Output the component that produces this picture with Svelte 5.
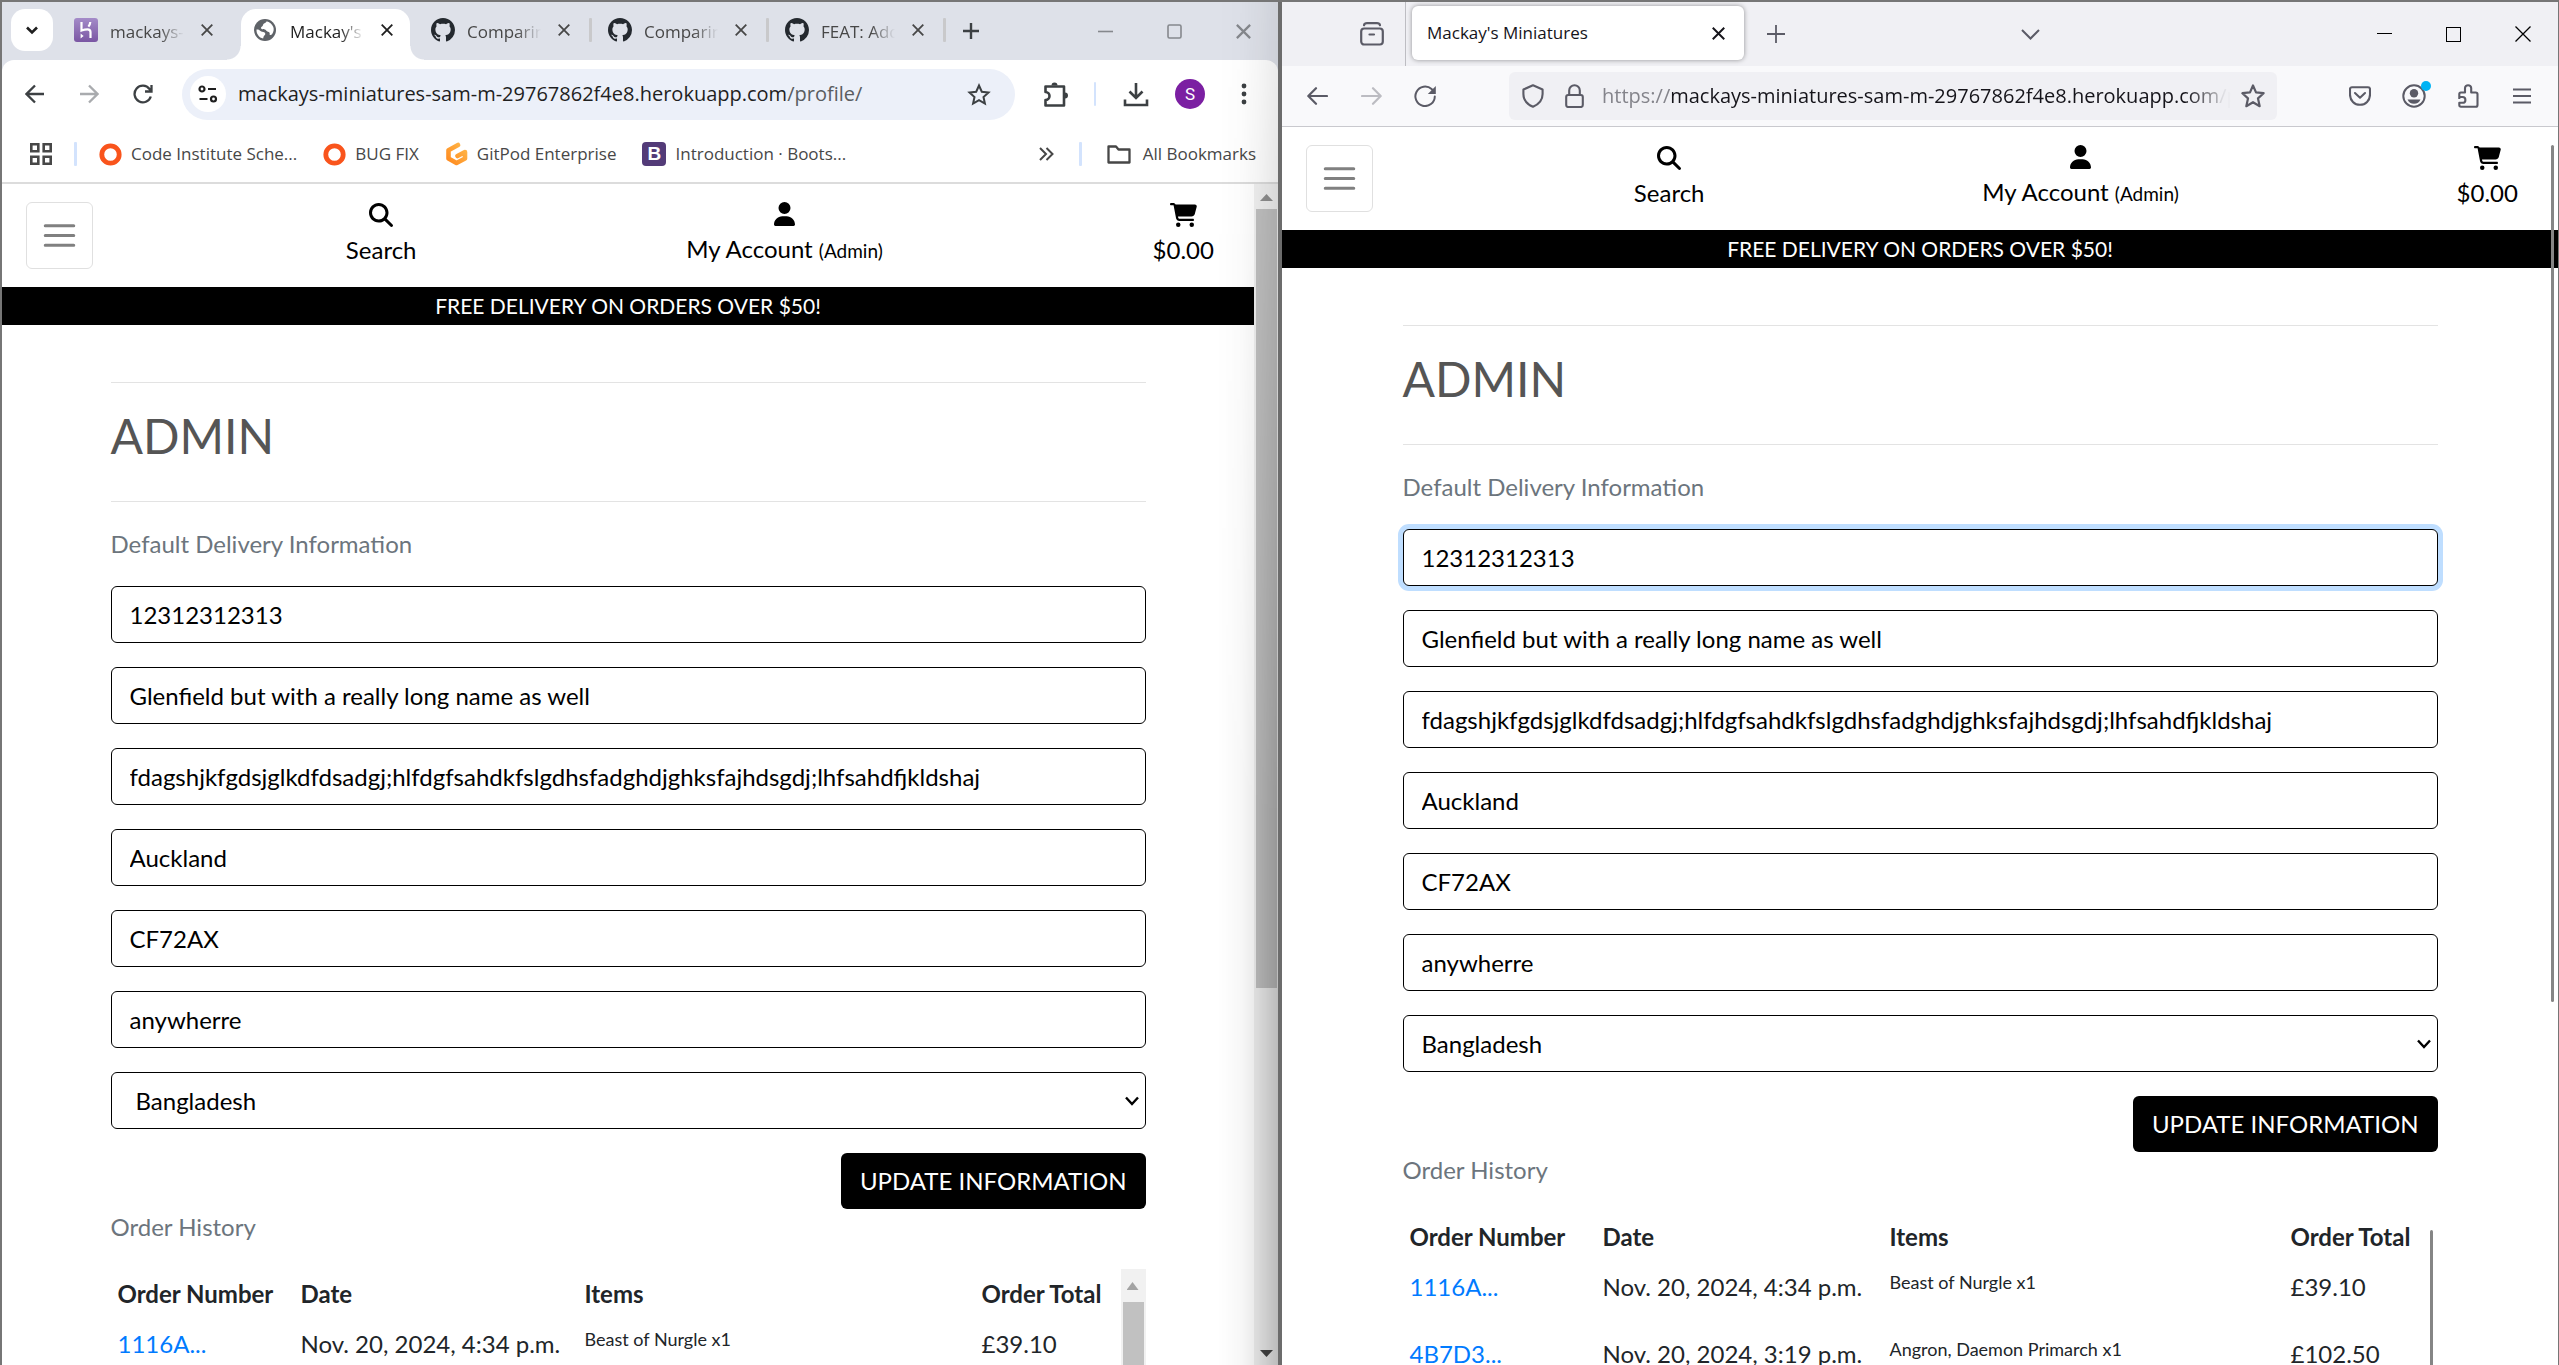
<script lang="ts">
  type Order = { number: string; date: string; items: string; total: string };

  const bookmarks = [
    { label: 'Code Institute Sche...', icon: 'ring' },
    { label: 'BUG FIX', icon: 'ring' },
    { label: 'GitPod Enterprise', icon: 'gitpod' },
    { label: 'Introduction · Boots...', icon: 'bootstrap' }
  ];

  const tabs = [
    { title: 'mackays-minis', icon: 'heroku', active: false },
    { title: "Mackay's Mini", icon: 'globe', active: true },
    { title: 'Comparing', icon: 'github', active: false },
    { title: 'Comparing', icon: 'github', active: false },
    { title: 'FEAT: Add or', icon: 'github', active: false }
  ];

  const fields = [
    { name: 'phone', label: 'Phone Number', value: '12312312313' },
    { name: 'address1', label: 'Street Address 1', value: 'Glenfield but with a really long name as well' },
    { name: 'address2', label: 'Street Address 2', value: 'fdagshjkfgdsjglkdfdsadgj;hlfdgfsahdkfslgdhsfadghdjghksfajhdsgdj;lhfsahdfjkldshaj' },
    { name: 'town', label: 'Town or City', value: 'Auckland' },
    { name: 'postcode', label: 'Postal Code', value: 'CF72AX' },
    { name: 'county', label: 'County', value: 'anywherre' }
  ];

  const orders: Order[] = [
    { number: '1116A...', date: 'Nov. 20, 2024, 4:34 p.m.', items: 'Beast of Nurgle x1', total: '£39.10' },
    { number: '4B7D3...', date: 'Nov. 20, 2024, 3:19 p.m.', items: 'Angron, Daemon Primarch x1', total: '£102.50' }
  ];
</script>

{#snippet cross(size: number)}
  <svg width={size} height={size} viewBox="0 0 12 12" fill="none" stroke="currentColor" stroke-width="1.8"><path d="M.7.7l10.6 10.6M11.3.7L.7 11.3" /></svg>
{/snippet}

{#snippet tabIcon(kind: string)}
  {#if kind === 'heroku'}
    <svg width="24" height="24" viewBox="0 0 24 24">
      <defs><linearGradient id="hk" x1="0" y1="0" x2="0" y2="1"><stop offset="0" stop-color="#a48bc8" /><stop offset="1" stop-color="#7a56a3" /></linearGradient></defs>
      <rect width="24" height="24" rx="3" fill="url(#hk)" />
      <path d="M7.5 4v8.6c2.300-.9 4.200-1.300 6-1.300 2 0 3 1 3 2.700v6M16.300 4c-.1 1.900-.8 3.300-1.900 4.600" fill="none" stroke="#fff" stroke-width="2.200" />
      <path d="M6.600 15.500l3 2.500-3 2.500z" fill="#fff" />
    </svg>
  {:else if kind === 'globe'}
    <svg width="22" height="22" viewBox="0 0 22 22">
      <circle cx="11" cy="11" r="11" fill="#5f6368" />
      <path d="M2.500 10.500c1.500-.3 3 .2 4 1.500.9 1 2.500.6 3.700 1.200 1.600.8 1.300 2.500.2 3.400-.8.700-.9 1.900-1.300 3C5 18.600 2.300 15 2.500 10.500zM12.500 2.200c-.3 1.500-1.700 1.800-2.800 2.600-1 .8-.5 2.200-1.700 2.700-.9.500-1.400 1.500-.6 2.200.9.800 2.500.3 3.600.9 1.200.7 1.500 2 2.900 2.100 1.700.1 2.100 1.500 1.700 3 .9.400 1.800.300 2.600-.6 1.500-2.100 1.900-4.600 1.100-7-1.200-3.300-3.800-5.400-6.800-5.900z" fill="#fff" />
    </svg>
  {:else}
    <svg width="24" height="24" viewBox="0 0 16 16" fill="#24292f"><path d="M8 0C3.580 0 0 3.580 0 8c0 3.540 2.290 6.530 5.470 7.590.4.070.55-.17.55-.38 0-.19-.01-.82-.01-1.490-2.010.370-2.530-.49-2.690-.94-.09-.23-.48-.94-.82-1.130-.28-.15-.68-.52-.01-.53.63-.01 1.080.580 1.230.820.720 1.210 1.870.870 2.330.660.070-.52.280-.87.510-1.070-1.780-.2-3.640-.89-3.640-3.950 0-.87.310-1.590.820-2.150-.08-.2-.36-1.020.080-2.120 0 0 .67-.21 2.200.820.640-.18 1.320-.27 2-.27.680 0 1.360.090 2 .27 1.530-1.040 2.200-.82 2.200-.82.440 1.100.160 1.920.080 2.120.510.560.820 1.270.820 2.150 0 3.070-1.870 3.750-3.650 3.950.290.250.540.730.540 1.480 0 1.070-.01 1.930-.01 2.200 0 .21.150.460.550.380A8.013 8.013 0 0016 8c0-4.420-3.580-8-8-8z" /></svg>
  {/if}
{/snippet}

{#snippet shop(prefix: string, count: number, focused: boolean)}
  <header class="nav">
    <button class="toggler" aria-label="Menu">
      <svg width="45" height="45" viewBox="0 0 30 30" fill="none" stroke="#808080" stroke-width="2" stroke-linecap="round"><path d="M5.500 8.500h19M5.500 15h19M5.500 21.500h19" /></svg>
    </button>
    <a class="nav-item" href="#search">
      <svg width="24" height="24" viewBox="0 0 512 512"><path d="M416 208c0 45.900-14.900 88.300-40 122.700L502.600 457.400c12.500 12.500 12.500 32.800 0 45.300s-32.800 12.500-45.300 0L330.700 376c-34.400 25.200-76.800 40-122.700 40C93.100 416 0 322.900 0 208S93.100 0 208 0S416 93.100 416 208zM208 352a144 144 0 1 0 0-288 144 144 0 1 0 0 288z" /></svg>
      <span>Search</span>
    </a>
    <a class="nav-item" href="#account">
      <svg width="21" height="24" viewBox="0 0 448 512"><path d="M224 256A128 128 0 1 0 224 0a128 128 0 1 0 0 256zm-45.700 48C79.800 304 0 383.800 0 482.300C0 498.700 13.300 512 29.700 512H418.300c16.400 0 29.700-13.300 29.700-29.700C448 383.800 368.200 304 269.700 304H178.300z" /></svg>
      <span>My Account <small>(Admin)</small></span>
    </a>
    <a class="nav-item" href="#basket">
      <svg width="27" height="24" viewBox="0 0 576 512"><path d="M0 24C0 10.700 10.700 0 24 0H69.500c22 0 41.500 12.800 50.600 32h411c26.300 0 45.500 25 38.600 50.400l-41 152.300c-8.500 31.400-37 53.300-69.500 53.300H170.700l5.400 28.500c2.200 11.300 12.100 19.500 23.600 19.500H488c13.300 0 24 10.700 24 24s-10.700 24-24 24H199.700c-34.600 0-64.300-24.600-70.700-58.500L77.400 54.500c-.7-3.800-4-6.500-7.900-6.500H24C10.700 48 0 37.300 0 24zM128 464a48 48 0 1 1 96 0 48 48 0 1 1 -96 0zm336-48a48 48 0 1 1 0 96 48 48 0 1 1 0-96z" /></svg>
      <span>$0.00</span>
    </a>
  </header>
  <p class="banner">FREE DELIVERY ON ORDERS OVER $50!</p>
  <main class="profile">
    <hr />
    <h1>ADMIN</h1>
    <hr />
    <p class="muted">Default Delivery Information</p>
    <form>
      {#each fields as field, i}
        <input class="field" class:focused={focused && i === 0} id="{prefix}-{field.name}" type="text" aria-label={field.label} value={field.value} />
      {/each}
      <div class="select-wrap">
        <select class="field" id="{prefix}-country" aria-label="Country"><option>Bangladesh</option></select>
        <svg class="chevron" width="14" height="10" viewBox="0 0 14 10" fill="none" stroke="#000" stroke-width="2.400"><path d="M1 1.500l6 6.500 6-6.500" /></svg>
      </div>
      <button class="update" type="button">UPDATE INFORMATION</button>
    </form>
    <p class="muted">Order History</p>
    <div class="history">
      <table>
        <thead>
          <tr><th>Order Number</th><th>Date</th><th>Items</th><th>Order Total</th></tr>
        </thead>
        <tbody>
          {#each orders.slice(0, count) as order}
            <tr>
              <td><a href="#order">{order.number}</a></td>
              <td>{order.date}</td>
              <td class="items">{order.items}</td>
              <td>{order.total}</td>
            </tr>
          {/each}
        </tbody>
      </table>
      <div class="inner-bar"></div>
    </div>
  </main>
{/snippet}

<div class="desktop">
  <section class="window chrome">
    <div class="tabstrip">
      <button class="tab-search" aria-label="Search tabs">
        <svg width="12" height="9" viewBox="0 0 12 9" fill="none" stroke="#1f1f1f" stroke-width="2.600"><path d="M1 1.500l5 5 5-5" /></svg>
      </button>
      {#each tabs as tab, i}
        <div class="tab" class:active={tab.active} class:first={i === 0}>
          <span class="tab-icon">{@render tabIcon(tab.icon)}</span>
          <span class="tab-title">{tab.title}</span>
          <button class="close" aria-label="Close tab">{@render cross(12)}</button>
        </div>
      {/each}
      <button class="new-tab" aria-label="New tab"><svg width="16" height="16" viewBox="0 0 16 16" stroke="#3c4043" stroke-width="2.400"><path d="M8 0v16M0 8h16" /></svg></button>
      <div class="controls faded">
        <button aria-label="Minimize"><svg width="15" height="15" viewBox="0 0 15 15" stroke="currentColor" stroke-width="1.600"><path d="M0 7.500h15" /></svg></button>
        <button aria-label="Maximize"><svg width="15" height="15" viewBox="0 0 15 15" fill="none" stroke="currentColor" stroke-width="1.600"><rect x="1" y="1" width="13" height="13" rx="1.500" /></svg></button>
        <button aria-label="Close">{@render cross(15)}</button>
      </div>
    </div>

    <div class="toolbar">
      <button class="tool" aria-label="Back"><svg width="20" height="20" viewBox="0 0 20 20" fill="none" stroke="#3c4043" stroke-width="2.300"><path d="M19 10H2M10 1.500L1.500 10l8.500 8.500" /></svg></button>
      <button class="tool" aria-label="Forward"><svg width="20" height="20" viewBox="0 0 20 20" fill="none" stroke="#a9abae" stroke-width="2.300"><path d="M1 10h17M10 1.500l8.500 8.500-8.500 8.500" /></svg></button>
      <button class="tool" aria-label="Reload"><svg width="20" height="20" viewBox="0 0 20 20" fill="none" stroke="#3c4043" stroke-width="2.300"><path d="M17.800 12.500A8.300 8.300 0 1 1 16.500 5l2 2M18.500 1v6.500H12" /></svg></button>
      <div class="omnibox">
        <button class="site" aria-label="Site information"><svg width="20" height="18" viewBox="0 0 20 18" fill="none" stroke="#1f1f1f" stroke-width="2.200"><circle cx="4" cy="4" r="2.500" /><path d="M10 4h8M1.500 14h8" /><circle cx="15.500" cy="14" r="2.500" /></svg></button>
        <span class="url">mackays-miniatures-sam-m-29767862f4e8.herokuapp.com<span class="path">/profile/</span></span>
        <button class="star" aria-label="Bookmark"><svg width="24" height="23" viewBox="0 0 24 23" fill="none" stroke="#3c4043" stroke-width="2"><path d="M12 2.500l2.800 6.200 6.700.7-5 4.600 1.400 6.600-5.900-3.400-5.900 3.400 1.400-6.600-5-4.600 6.700-.7z" /></svg></button>
      </div>
      <button class="tool puzzle" aria-label="Extensions"><svg width="26" height="25" viewBox="0 0 26 25" fill="none" stroke="#3c4043" stroke-width="2.600" stroke-linejoin="round"><path d="M2.500 4.500h18.500v19H2.500v-5.500a4 4 0 0 0 0-8z" /><path d="M8.500 3.500a3 3 0 0 1 6 0zM22 10.500a3 3 0 0 1 0 6z" fill="#3c4043" stroke="none" /></svg></button>
      <span class="divider thin"></span>
      <button class="tool" aria-label="Downloads"><svg width="26" height="25" viewBox="0 0 26 25" fill="none" stroke="#3c4043" stroke-width="2.600"><path d="M13 1v14.500M6.500 9.500l6.500 6.500 6.500-6.500M2 17.500v5.500h22v-5.500" /></svg></button>
      <button class="tool" aria-label="Profile S"><span class="avatar">S</span></button>
      <button class="tool" aria-label="More"><svg width="6" height="22" viewBox="0 0 6 22" fill="#3c4043"><circle cx="3" cy="3" r="2.400" /><circle cx="3" cy="11" r="2.400" /><circle cx="3" cy="19" r="2.400" /></svg></button>
    </div>

    <div class="bookmarks">
      <button class="apps" aria-label="Apps"><svg width="22" height="22" viewBox="0 0 22 22" fill="none" stroke="#474747" stroke-width="2.600"><path d="M1.300 1.300h7v7h-7zM13.700 1.300h7v7h-7zM1.300 13.700h7v7h-7zM13.700 13.700h7v7h-7z" /></svg></button>
      <span class="divider"></span>
      {#each bookmarks as mark}
        <a class="bookmark" href="#bookmark">
          {#if mark.icon === 'ring'}
            <svg width="23" height="23" viewBox="0 0 23 23"><circle cx="11.500" cy="11.500" r="8.700" fill="none" stroke="#f9541c" stroke-width="4.800" /></svg>
          {:else if mark.icon === 'gitpod'}
            <svg width="23" height="24" viewBox="0 0 23 24" fill="none" stroke-width="4.600" stroke-linejoin="round" stroke-linecap="round"><defs><linearGradient id="gp" x1="1" y1="0" x2="0" y2="1"><stop offset="0" stop-color="#ffb84a" /><stop offset="1" stop-color="#ff8a1f" /></linearGradient></defs><path stroke="url(#gp)" d="M13 3L3.500 8.200v8.300L11.500 21l8.500-4.500V10l-7.500 4" /></svg>
          {:else}
            <span class="bs">B</span>
          {/if}
          {mark.label}
        </a>
      {/each}
      <button class="more" aria-label="More bookmarks"><svg width="15" height="14" viewBox="0 0 15 14" fill="none" stroke="#474747" stroke-width="2"><path d="M1 1l6 6-6 6M7.500 1l6 6-6 6" /></svg></button>
      <span class="divider"></span>
      <button class="all"><svg width="24" height="19" viewBox="0 0 24 19" fill="none" stroke="#474747" stroke-width="2.300" stroke-linejoin="round"><path d="M1.500 1.500h7.500l2.500 3h11v13h-21z" /></svg>All Bookmarks</button>
    </div>

    <div class="viewport">
      <div class="page">{@render shop('left', 1, false)}</div>
      <div class="scrollbar">
        <svg width="13" height="7" viewBox="0 0 13 7" fill="#8f8f8f"><path d="M6.500 0L13 7H0z" /></svg>
        <span class="thumb"></span>
        <svg width="13" height="7" viewBox="0 0 13 7" fill="#444"><path d="M0 0h13L6.500 7z" /></svg>
      </div>
    </div>
    <div class="shade"></div>
  </section>

  <section class="window firefox">
    <div class="ff-tabs">
      <button class="recent" aria-label="Recent browsing"><svg width="24" height="24" viewBox="0 0 24 24" fill="none" stroke="#5b5b66" stroke-width="2.200" stroke-linecap="round"><rect x="1.200" y="6.500" width="21.600" height="16" rx="3" /><path d="M4 3.200Q4.500 1.200 7 1.200h10q2.500 0 3 2M9.500 12.500h4.500" /></svg></button>
      <div class="ff-tab"><span>Mackay's Miniatures</span><button class="close" aria-label="Close tab">{@render cross(13)}</button></div>
      <button class="ff-new" aria-label="New tab"><svg width="18" height="18" viewBox="0 0 18 18" stroke="#5b5b66" stroke-width="1.800"><path d="M9 0v18M0 9h18" /></svg></button>
      <button class="list" aria-label="List all tabs"><svg width="19" height="11" viewBox="0 0 19 11" fill="none" stroke="#5b5b66" stroke-width="2"><path d="M1 1l8.500 8.500L18 1" /></svg></button>
      <div class="controls">
        <button aria-label="Minimize"><svg width="15" height="15" viewBox="0 0 15 15" stroke="currentColor" stroke-width="1"><path d="M0 6.500h15" /></svg></button>
        <button aria-label="Maximize"><svg width="15" height="15" viewBox="0 0 15 15" fill="none" stroke="currentColor" stroke-width="1"><rect x=".5" y=".5" width="14" height="14" /></svg></button>
        <button aria-label="Close"><svg width="16" height="16" viewBox="0 0 16 16" stroke="currentColor" stroke-width="1.300"><path d="M.5.5l15 15M15.500.5l-15 15" /></svg></button>
      </div>
    </div>

    <div class="ff-toolbar">
      <button class="tool" aria-label="Back"><svg width="21" height="18" viewBox="0 0 21 18" fill="none" stroke="#5b5b66" stroke-width="2.200" stroke-linecap="round" stroke-linejoin="round"><path d="M20 9H1.500M9 1.200L1.300 9 9 16.800" /></svg></button>
      <button class="tool" aria-label="Forward"><svg width="21" height="18" viewBox="0 0 21 18" fill="none" stroke="#bcbcc2" stroke-width="2.200" stroke-linecap="round" stroke-linejoin="round"><path d="M1 9h18.500M12 1.200L19.700 9 12 16.800" /></svg></button>
      <button class="tool" aria-label="Reload"><svg width="22" height="22" viewBox="0 0 22 22" fill="none" stroke="#5b5b66" stroke-width="2" stroke-linecap="round"><path d="M20.800 11.500a9.700 9.700 0 1 1-3.200-7.400l2 2" /><path d="M21.800 1v8h-8z" fill="#5b5b66" stroke="none" /></svg></button>
      <div class="urlbar">
        <svg class="shield" width="22" height="24" viewBox="0 0 22 24" fill="none" stroke="#5b5b66" stroke-width="2.100" stroke-linejoin="round"><path d="M11 1.200l9.600 4.300v4.500c0 5.500-3.300 10-9.600 12.800C4.700 20 1.400 15.500 1.400 10V5.500z" /></svg>
        <svg class="lock" width="19" height="24" viewBox="0 0 19 24" fill="none" stroke="#5b5b66" stroke-width="2.100"><rect x="1.200" y="11" width="16.600" height="12" rx="2" /><path d="M4.200 11V6.500a5.300 5.300 0 0 1 10.600 0V11" /></svg>
        <span class="url"><span class="path">https://</span>mackays-miniatures-sam-m-29767862f4e8.herokuapp.com<span class="path">/profile/</span></span>
        <button class="star" aria-label="Bookmark"><svg width="24" height="24" viewBox="0 0 24 24" fill="none" stroke="#5b5b66" stroke-width="2.200" stroke-linejoin="round"><path d="M12 1.500l3 6.900 7.600.8-5.600 5.200 1.700 7.800L12 18.200l-6.700 4 1.700-7.800L1.400 9.200 9 8.400z" /></svg></button>
      </div>
      <button class="tool" aria-label="Pocket"><svg width="22" height="20" viewBox="0 0 22 20" fill="none" stroke="#5b5b66" stroke-width="2.100" stroke-linecap="round" stroke-linejoin="round"><path d="M3 1.200h16a2 2 0 0 1 2 2v5.300c0 6-4.500 10.300-10 10.300S1 14.500 1 8.500V3.200a2 2 0 0 1 2-2z" /><path d="M6 7l5 4.700L16 7" /></svg></button>
      <button class="tool account" aria-label="Account"><svg width="24" height="24" viewBox="0 0 24 24" fill="#5b5b66"><circle cx="12" cy="12" r="10.700" fill="none" stroke="#5b5b66" stroke-width="2" /><circle cx="12" cy="9.300" r="4.200" /><path d="M5.500 15.500h13c-1 2.800-3.500 4.200-6.500 4.200s-5.500-1.400-6.500-4.200z" /></svg><span class="dot"></span></button>
      <button class="tool" aria-label="Extensions"><svg width="21" height="24" viewBox="0 0 21 24" fill="none" stroke="#5b5b66" stroke-width="2.100" stroke-linejoin="round"><path d="M1.300 15V10q0-1.500 1.500-1.500H7V4.300a3.100 3.100 0 0 1 6.200 0v4.200h4.500q1.800 0 1.800 1.800v10.700q0 1.800-1.800 1.800H3q-1.700 0-1.700-1.700v-2.300h3.200a2.900 2.900 0 0 0 0-5.800H1.300" /></svg></button>
      <button class="tool" aria-label="Menu"><svg width="18" height="16" viewBox="0 0 18 16" stroke="#5b5b66" stroke-width="2"><path d="M0 1.500h18M0 8h18M0 14.500h18" /></svg></button>
    </div>

    <div class="viewport">
      <div class="page">{@render shop('right', 2, true)}</div>
      <span class="overlay-bar"></span>
    </div>
  </section>
</div>

<style>
  :global(body) { margin: 0; overflow: hidden; background: #fff; }
  * { box-sizing: border-box; }
  svg { display: block; flex: none; }
  button { border: 0; padding: 0; background: none; font: inherit; color: inherit; }
  p, h1 { margin: 0; }

  .desktop {
    display: grid;
    grid-template-columns: 1282fr 1277fr;
    height: 100vh;
    border-top: 2px solid #767676;
    overflow: hidden;
    font-family: "Open Sans", "Noto Sans", sans-serif;
    font-size: 17px;
    line-height: 24px;
    color: #474747;
  }
  .window { display: flex; flex-direction: column; min-width: 0; min-height: 0; position: relative; }
  .chrome { border-left: 2px solid #767676; border-right: 4px solid #6c6c6c; background: #dee1e9; }
  .firefox { border-right: 1px solid #767676; background: #fff; }
  .viewport { flex: 1; min-height: 0; display: flex; position: relative; overflow: hidden; background: #fff; }
  .page { flex: 1; min-width: 0; }

  .tabstrip { display: flex; align-items: center; height: 58px; padding-left: 9px; }
  .tab-search { display: grid; place-items: center; width: 42px; height: 42px; margin: 0 8px 2px 0; border-radius: 14px; background: #fff; }
  .tab { position: relative; display: flex; align-items: center; width: 177px; height: 51px; margin-top: 7px; padding: 0 0 9px 13px; }
  .tab.first { width: 180px; }
  .tab-icon { width: 24px; margin-right: 12px; }
  .tab-title { width: 74px; margin-right: 17px; padding-top: 3px; overflow: hidden; white-space: nowrap; mask-image: linear-gradient(90deg, #000 50px, transparent 74px); }
  .tab:not(.active, .first)::after { content: ""; width: 3px; height: 24px; margin-left: 19px; background: #c9c9cb; border-radius: 1px; }
  .tab.active { width: 169px; margin-right: 8px; background: #fff; border-radius: 15px 15px 0 0; color: #1f1f1f; }
  .tab.active::before, .tab.active::after { content: ""; position: absolute; bottom: 0; width: 14px; height: 14px; }
  .tab.active::before { right: 100%; background: radial-gradient(circle at 0 0, transparent 13px, #fff 14px); }
  .tab.active::after { left: 100%; background: radial-gradient(circle at 100% 0, transparent 13px, #fff 14px); }
  .new-tab { margin-left: 14px; }
  .controls { display: flex; margin-left: auto; color: #000; }
  .controls button { display: grid; place-items: center; width: 69px; height: 48px; }
  .faded { color: #85888d; }

  .toolbar { display: flex; align-items: center; height: 68px; padding: 0 7px 0 6px; background: #fff; border-radius: 12px 12px 0 0; }
  .tool { display: grid; place-items: center; width: 54px; height: 48px; }
  .omnibox { flex: 1; min-width: 0; display: flex; align-items: center; height: 51px; margin-left: 12px; padding: 0 24px 0 8px; border-radius: 26px; background: #ecf0f9; color: #1f1f1f; }
  .site { display: grid; place-items: center; width: 36px; height: 36px; margin-right: 12px; border-radius: 50%; background: #fff; }
  .url { flex: 1; min-width: 0; overflow: hidden; white-space: nowrap; font-size: 20px; line-height: 28px; }
  .omnibox .path { color: #5a5d61; }
  .puzzle { width: 48px; margin-left: 17px; }
  .divider { width: 3px; height: 24px; border-radius: 1px; background: #d3e3fd; }
  .divider.thin { width: 2px; margin: 0 13px 0 14px; }
  .avatar { display: grid; place-items: center; width: 30px; height: 30px; border-radius: 50%; background: #7b1fa2; color: #fff; font-family: Roboto, sans-serif; font-size: 17px; }

  .bookmarks { display: flex; align-items: center; height: 54px; padding: 0 22px 2px 28px; background: #fff; border-bottom: 0; font-size: 17px; }
  .bookmarks + .viewport { border-top: 2px solid #dcdcdc; }
  .apps { margin-right: 22px; }
  .bookmark { display: flex; align-items: center; gap: 9px; margin-left: 22px; color: #474747; text-decoration: none; white-space: nowrap; }
  .bookmark + .bookmark { margin-left: 26px; }
  .bs { display: grid; place-items: center; width: 24px; height: 24px; border-radius: 4px; background: #533b78; color: #fff; font-family: "Liberation Sans", sans-serif; font-size: 19px; font-weight: 700; }
  .more { margin: 0 25px 0 auto; }
  .all { display: flex; align-items: center; gap: 12px; margin-left: 25px; white-space: nowrap; }

  .scrollbar { display: flex; flex-direction: column; align-items: center; width: 24px; padding: 10px 0 8px; background: #f1f1f1; }
  .thumb { width: 21px; height: 67%; margin: 8px 0 auto; background: #c1c1c1; }
  .shade {
    position: absolute; top: 0; right: 0; bottom: 0; width: 60px; pointer-events: none;
    background: linear-gradient(90deg, transparent, rgba(0, 0, 0, .03) 40%, rgba(0, 0, 0, .09) 65%, rgba(0, 0, 0, .22));
    mask-image: linear-gradient(rgba(0, 0, 0, .3), #000 60%);
  }

  .ff-tabs { display: flex; align-items: center; height: 64px; padding-right: 1px; background: #f0f0f4; }
  .recent { display: flex; align-items: center; height: 64px; padding: 0 21px 0 78px; border-right: 1px solid #bdbdc2; }
  .ff-tab { display: flex; align-items: center; justify-content: space-between; width: 332px; height: 54px; margin: 0 23px 2px 6px; padding: 0 19px 0 15px; background: #fff; border-radius: 6px; box-shadow: 0 0 5px rgba(0, 0, 0, .4); color: #15141a; }
  .list { margin: 0 74px 0 auto; }
  .ff-toolbar { display: flex; align-items: center; height: 61px; padding: 0 9px 0 8px; background: #f9f9fb; border-bottom: 1px solid #c9c9ce; }
  .urlbar { flex: 1; min-width: 0; display: flex; align-items: center; height: 48px; margin: 0 56px 0 57px; padding: 0 12px 0 13px; border-radius: 6px; background: #f0f0f4; color: #15141a; }
  .shield { margin-right: 21px; }
  .lock { margin-right: 18px; }
  .urlbar .url { margin-right: 10px; mask-image: linear-gradient(90deg, #000 calc(100% - 45px), transparent); }
  .urlbar .path { color: #84848b; }
  .account { position: relative; }
  .dot { position: absolute; top: 9px; right: 10px; width: 10px; height: 10px; border-radius: 50%; background: #00b3f4; }
  .overlay-bar { position: absolute; top: 18px; right: 4px; width: 3px; height: 857px; border-radius: 2px; background: #858585; }

  .page { font-family: Lato, sans-serif; font-size: 24px; line-height: 36px; color: #212529; }
  .nav { display: flex; align-items: center; justify-content: space-between; height: 103px; padding: 0 40px 0 24px; }
  .toggler { display: grid; place-items: center; width: 67px; height: 67px; margin-right: -17px; border: 1px solid #e0e0e0; border-radius: 6px; }
  .nav-item { display: flex; flex-direction: column; align-items: center; gap: 5px; color: #000; text-decoration: none; white-space: nowrap; }
  .nav-item small { font-size: 19px; }
  .banner { height: 38px; background: #000; color: #fff; font-size: 21px; line-height: 38px; text-align: center; }
  .profile { max-width: 1035px; margin: 0 auto; padding-top: 57px; }
  hr { margin: 0 0 24px; border: 0; border-top: 1px solid #e3e3e3; }
  h1 { margin-bottom: 36px; font-size: 48px; font-weight: 400; line-height: 58px; color: #555; }
  .muted { margin-bottom: 24px; color: #6c757d; }
  form { display: flex; flex-direction: column; gap: 24px; }
  .field { display: block; width: 100%; height: 57px; padding: 0 18px; border: 1px solid #000; border-radius: 6px; outline: 0; background: #fff; font: inherit; color: #000; }
  .focused { box-shadow: 0 0 0 5px #bfdeff; }
  .select-wrap { display: grid; align-items: center; }
  .select-wrap > * { grid-area: 1 / 1; }
  select.field { appearance: none; padding-left: 24px; }
  .firefox select.field { padding-left: 18px; }
  .chevron { justify-self: end; margin-right: 7px; pointer-events: none; }
  .update { align-self: flex-end; height: 56px; padding: 0 19px; border-radius: 6px; background: #000; color: #fff; }
  .history { position: relative; display: flex; }
  table { flex: 1; table-layout: fixed; border-collapse: collapse; width: 100%; }
  th, td { padding: 7px; text-align: left; vertical-align: top; white-space: nowrap; }
  th { font-weight: 700; }
  th:nth-child(1) { width: 183px; }
  th:nth-child(2) { width: 284px; }
  th:nth-child(3) { width: 397px; }
  .firefox th:nth-child(1) { width: 193px; }
  .firefox th:nth-child(2) { width: 287px; }
  .firefox th:nth-child(3) { width: 401px; }
  td { height: 67px; }
  td a { color: #007bff; text-decoration: none; }
  .items { font-size: 18px; line-height: 26px; }
  .chrome .inner-bar { width: 25px; background: linear-gradient(#c1c1c1, #c1c1c1) 2px 33px / 21px 100% no-repeat #f1f1f1; }
  .chrome .inner-bar::before { content: ""; display: block; width: 12px; height: 8px; margin: 13px auto 0 6px; background: #a3a3a3; clip-path: polygon(50% 0, 100% 100%, 0 100%); }
  .firefox .inner-bar { position: absolute; top: 18px; right: 5px; bottom: 0; width: 3px; border-radius: 2px; background: #858585; }
</style>
